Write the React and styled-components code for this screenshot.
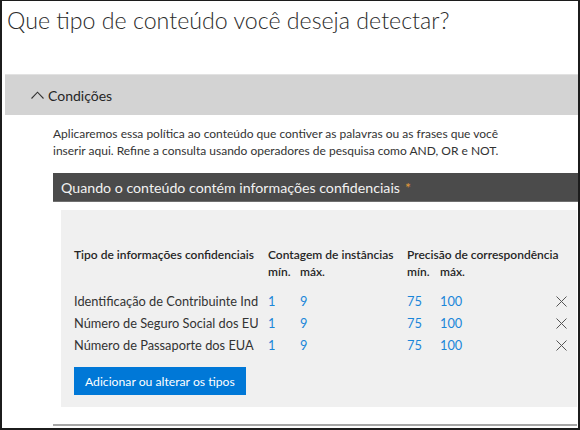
import React from 'react';
import styled, { createGlobalStyle } from 'styled-components';

const GlobalStyle = createGlobalStyle`
    html, body {
        margin: 0;
        padding: 0;
        background: #fff;
    }
    * {
        box-sizing: border-box;
    }
`

const Frame = styled.div`
    width: 580px;
    height: 430px;
    border: 2px solid #1c1c1c;
    border-top-width: 1px;
    overflow: hidden;
    font-family: 'Lato', 'Noto Sans', sans-serif;
    color: #262626;
    background: #fff;
`
const Title = styled.h1`
    margin: 4px 0 0 5px;
    font-size: 23.2px;
    line-height: 30px;
    font-weight: 300;
    color: #2b2b2b;
    white-space: nowrap;
`
const Band = styled.div`
    display: flex;
    align-items: center;
    gap: 4px;
    height: 41px;
    margin: 39px 0 0 3px;
    padding-left: 26px;
    background: #d3d3d3;
    border-top: 1px solid #e2e2e2;
    font-size: 14px;
    color: #262626;
`
const Section = styled.div`
    padding-left: 51px;
`
const Paragraph = styled.p`
    margin: 10px 0 0 0;
    font-size: 12px;
    line-height: 17px;
    color: #333;
    width: 460px;
`
const DarkHeader = styled.div`
    display: flex;
    align-items: center;
    height: 29px;
    margin-top: 14px;
    padding-left: 8px;
    background: #4b4b4b;
    border-bottom: 1px solid #6f6f6f;
    color: #f2f2f2;
    font-size: 14.2px;
`
const Required = styled.span`
    color: #e39b3a;
    margin-left: 5px;
`
const Panel = styled.div`
    margin: 8px 1px 0 8px;
    height: 197px;
    padding: 36px 9px 0 13px;
    background: #f0f0f0;
`
const Grid = styled.div`
    display: grid;
    grid-template-columns: 194px 32px 107px 33px 1fr 13px;
    font-size: 12px;
`
const HeadCell = styled.div`
    grid-column: ${p => p.$span || 'auto'};
    font-weight: 600;
    line-height: 17px;
    color: #262626;
    white-space: nowrap;
`
const NameCell = styled.div`
    line-height: 22px;
    height: 22px;
    width: 184px;
    overflow: hidden;
    white-space: nowrap;
    font-size: 12.8px;
    color: #333;
`
const NumCell = styled.div`
    line-height: 22px;
    font-size: 12.8px;
    color: #1a86d9;
`
const CloseCell = styled.div`
    display: flex;
    align-items: center;
    justify-content: flex-end;
    height: 22px;
    padding-right: 1px;
`
const Spacer = styled.div`
    grid-column: 1 / -1;
    height: 10px;
`
const Button = styled.button`
    display: block;
    margin-top: 11px;
    height: 28px;
    padding: 0 11px;
    border: none;
    background: #0078d7;
    color: #fff;
    font-family: inherit;
    font-size: 12.2px;
`
const BottomLine = styled.div`
    margin: 17px 1px 0 0;
    height: 2px;
    background: #a6a6a6;
`

function ChevronUp() {
    return (
        <svg width="13" height="8" viewBox="0 0 13 8">
            <path d="M0.5 7.5 L6.5 1.2 L12.5 7.5" fill="none" stroke="#333" strokeWidth="1.1" />
        </svg>
    )
}

function CloseIcon() {
    return (
        <svg width="11" height="11" viewBox="0 0 11 11">
            <path d="M0.5 0.5 L10.5 10.5 M10.5 0.5 L0.5 10.5" fill="none" stroke="#555" strokeWidth="1" />
        </svg>
    )
}

const rows = [
    { name: 'Identificação de Contribuinte Individual dos EUA', min: 1, max: 9, pmin: 75, pmax: 100 },
    { name: 'Número de Seguro Social dos EUA', min: 1, max: 9, pmin: 75, pmax: 100 },
    { name: 'Número de Passaporte dos EUA', min: 1, max: 9, pmin: 75, pmax: 100 },
];

export default function App() {
    return (
        <Frame>
            <GlobalStyle />
            <Title>Que tipo de conteúdo você deseja detectar?</Title>
            <Band>
                <ChevronUp />
                <span>Condições</span>
            </Band>
            <Section>
                <Paragraph>
                    Aplicaremos essa política ao conteúdo que contiver as palavras ou as frases que você inserir aqui. Refine a consulta usando operadores de pesquisa como AND, OR e NOT.
                </Paragraph>
                <DarkHeader>
                    Quando o conteúdo contém informações confidenciais<Required>*</Required>
                </DarkHeader>
                <Panel>
                    <Grid>
                        <HeadCell>Tipo de informações confidenciais</HeadCell>
                        <HeadCell $span="span 2">Contagem de instâncias</HeadCell>
                        <HeadCell $span="span 3">Precisão de correspondência</HeadCell>
                        <HeadCell />
                        <HeadCell>mín.</HeadCell>
                        <HeadCell>máx.</HeadCell>
                        <HeadCell>mín.</HeadCell>
                        <HeadCell $span="span 2">máx.</HeadCell>
                        <Spacer />
                        {rows.map(r => (
                            <React.Fragment key={r.name}>
                                <NameCell>{r.name}</NameCell>
                                <NumCell>{r.min}</NumCell>
                                <NumCell>{r.max}</NumCell>
                                <NumCell>{r.pmin}</NumCell>
                                <NumCell>{r.pmax}</NumCell>
                                <CloseCell><CloseIcon /></CloseCell>
                            </React.Fragment>
                        ))}
                    </Grid>
                    <Button>Adicionar ou alterar os tipos</Button>
                </Panel>
                <BottomLine />
            </Section>
        </Frame>
    )
}
